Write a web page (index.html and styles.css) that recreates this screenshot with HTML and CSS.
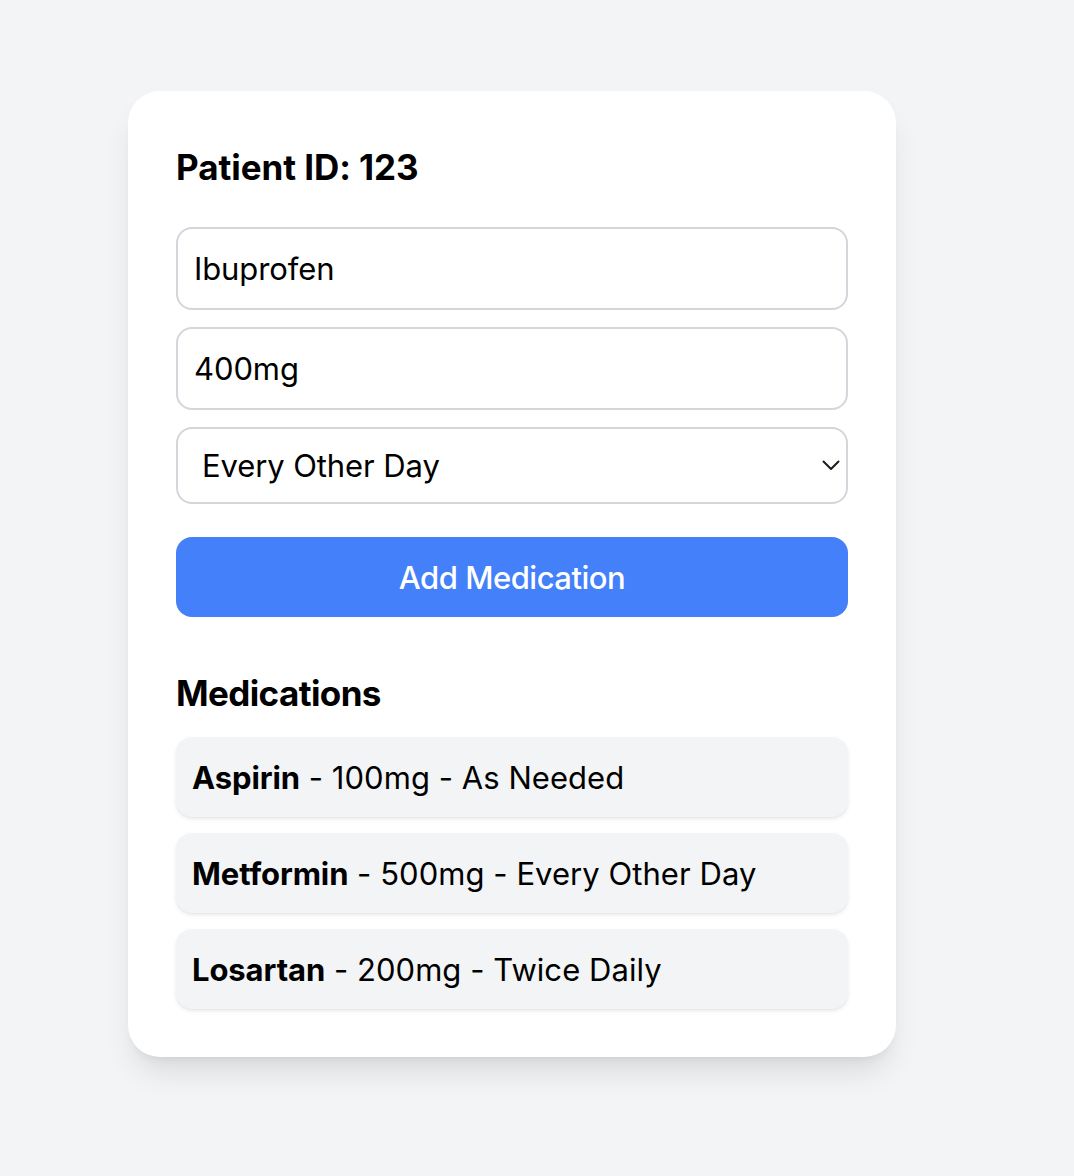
FILE: index.html
```html
<!DOCTYPE html>
<html lang="en">
<head>
<meta charset="utf-8">
<title>Patient Medications</title>
<link rel="stylesheet" href="styles.css">
</head>
<body>
<main class="page">
  <section class="card">
    <h2 class="title">Patient ID: 123</h2>
    <form class="form">
      <input class="field" type="text" value="Ibuprofen">
      <input class="field" type="text" value="400mg">
      <div class="select-wrap">
        <select class="select">
          <option>Once Daily</option>
          <option>Twice Daily</option>
          <option selected>Every Other Day</option>
          <option>As Needed</option>
        </select>
        <svg class="chevron" width="18" height="11" viewBox="0 0 18 11" aria-hidden="true"><path d="M1.5 1.5 L9 9 L16.5 1.5" fill="none" stroke="#1c1c1c" stroke-width="2" stroke-linecap="round" stroke-linejoin="round"/></svg>
      </div>
      <button class="btn" type="button">Add Medication</button>
    </form>
    <h3 class="subtitle">Medications</h3>
    <ul class="list">
      <li class="item"><strong>Aspirin</strong> - 100mg - As Needed</li>
      <li class="item"><strong>Metformin</strong> - 500mg - Every Other Day</li>
      <li class="item"><strong>Losartan</strong> - 200mg - Twice Daily</li>
    </ul>
  </section>
</main>
</body>
</html>
```
FILE: styles.css
```css
* { box-sizing: border-box; }
html, body { margin: 0; padding: 0; }
body {
  background: #f3f4f6;
  font-family: Inter, "Noto Sans", "Liberation Sans", sans-serif;
  color: #000;
}
.page {
  padding: 91px 0 0 128px;
  min-height: 1176px;
}
.card {
  width: 768px;
  background: #fff;
  border-radius: 32px;
  padding: 48px;
  box-shadow: 0 20px 30px -6px rgba(0,0,0,0.10), 0 8px 12px -8px rgba(0,0,0,0.10);
}
.title, .subtitle {
  margin: 0;
  font-size: 35px;
  line-height: 56px;
  font-weight: 700;
}
.title { margin-bottom: 32px; letter-spacing: -0.05px; }
.subtitle { margin-top: 48px; margin-bottom: 16px; letter-spacing: -0.6px; }
.form { display: flex; flex-direction: column; }
.field {
  display: block;
  width: 100%;
  height: 83px;
  margin: 0 0 17px;
  padding: 0 16px;
  border: 2px solid #d4d6db;
  border-radius: 16px;
  font-family: inherit;
  font-size: 31px;
  letter-spacing: -0.1px;
  color: #000;
  background: #fff;
  outline: none;
}
.select-wrap { position: relative; margin-bottom: 33px; }
.select {
  display: block;
  width: 100%;
  height: 77px;
  padding: 0 24px;
  border: 2px solid #d4d6db;
  border-radius: 16px;
  font-family: inherit;
  font-size: 31px;
  letter-spacing: -0.1px;
  color: #000;
  background: #fff;
  -webkit-appearance: none;
  appearance: none;
  outline: none;
}
.chevron {
  position: absolute;
  right: 8px;
  top: 33px;
}
.btn {
  display: block;
  width: 100%;
  height: 80px;
  border: 0;
  border-radius: 16px;
  background: #4380f9;
  color: #fff;
  font-family: inherit;
  font-size: 31px;
  font-weight: 500;
  letter-spacing: -0.5px;
}
.list { list-style: none; margin: 0; padding: 0; display: flex; flex-direction: column; gap: 16px; }
.item {
  height: 80px;
  padding: 0 16px;
  display: flex;
  align-items: center;
  white-space: pre;
  background: #f3f4f6;
  border-radius: 16px;
  font-size: 31px;
  letter-spacing: 0.05px;
  box-shadow: 0 2px 4px rgba(0,0,0,0.08), 0 1px 2px rgba(0,0,0,0.04);
}
.item strong { font-weight: 700; letter-spacing: -0.1px; }
```
